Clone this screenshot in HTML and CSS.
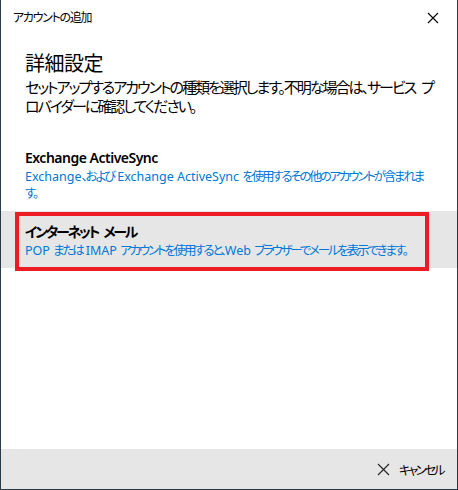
FILE: index.html
```html
<!DOCTYPE html>
<html lang="ja">
<head>
<meta charset="utf-8">
<title>アカウントの追加</title>
<link rel="stylesheet" href="styles.css">
</head>
<body>
<div class="window">
  <div class="titlebar">
    <span class="title">アカウントの追加</span>
    <svg class="close" width="12" height="12" viewBox="0 0 12 12"><path d="M1 1 L11 11 M11 1 L1 11" stroke="#000" stroke-width="1.1" fill="none"/></svg>
  </div>
  <div class="main">
    <div class="intro">
      <h1 class="heading">詳細設定</h1>
      <p class="subtitle">セットアップするアカウントの種類を選択します。不明な場合は、サービス プ<br>ロバイダーに確認してください。</p>
    </div>
    <div class="options">
      <div class="option">
        <div class="opt-title">Exchange ActiveSync</div>
        <div class="opt-desc">Exchange<span class="jp">、および</span> Exchange ActiveSync <span class="jp">を使用するその他のアカウントが含まれま</span><br><span class="jp">す。</span></div>
      </div>
      <div class="option selected">
        <div class="opt-title jp-title">インターネット メール</div>
        <div class="opt-desc">POP <span class="jp">または</span> IMAP <span class="jp">アカウントを使用すると、</span>Web <span class="jp">ブラウザーでメールを表示できます。</span></div>
        <div class="highlight"></div>
      </div>
    </div>
  </div>
  <div class="footer">
    <div class="cancel">
      <svg width="13" height="13" viewBox="0 0 13 13"><path d="M1 1 L12 12 M12 1 L1 12" stroke="#222" stroke-width="1.1" fill="none"/></svg>
      <span class="cancel-label">キャンセル</span>
    </div>
  </div>
</div>
</body>
</html>
```
FILE: styles.css
```css
html, body {
  margin: 0;
  padding: 0;
  background: #ffffff;
}
.window {
  width: 458px;
  height: 490px;
  box-sizing: border-box;
  border-left: 1px solid #2b3a45;
  border-right: 1px solid #2b3a45;
  border-bottom: 1px solid #2b3a45;
  display: flex;
  flex-direction: column;
  font-family: "Noto Sans", "Noto Sans CJK JP", sans-serif;
  font-feature-settings: "palt";
  color: #000;
}
.titlebar {
  height: 34px;
  display: flex;
  align-items: center;
  justify-content: space-between;
  padding: 0 18px 0 12px;
}
.title {
  font-size: 12px;
  letter-spacing: -1.3px;
}
.close {
  display: block;
  margin-top: 1px;
}
.main {
  flex: 1;
  display: flex;
  flex-direction: column;
}
.intro {
  padding: 16px 24px 0 24px;
}
.heading {
  margin: 0;
  font-size: 20px;
  font-weight: normal;
  line-height: 28px;
  letter-spacing: -0.5px;
}
.subtitle {
  margin: 0;
  font-size: 15px;
  line-height: 19px;
  letter-spacing: -2px;
  word-spacing: 4px;
  white-space: nowrap;
}
.options {
  margin-top: 21px;
  display: flex;
  flex-direction: column;
}
.option {
  position: relative;
  padding: 11px 24px 9px 24px;
}
.option.selected {
  background: #e6e6e6;
}
.opt-title {
  font-size: 14px;
  font-weight: 600;
  line-height: 20px;
  letter-spacing: -0.5px;
}
.opt-title.jp-title {
  letter-spacing: -2.3px;
  word-spacing: 4px;
}
.opt-desc {
  font-size: 12.5px;
  line-height: 17px;
  color: #0078d7;
  white-space: nowrap;
}
.jp {
  letter-spacing: -2.2px;
}
.highlight {
  position: absolute;
  left: 14px;
  right: 28px;
  top: 1px;
  bottom: -3px;
  border: 4px solid #ed1c24;
}
.footer {
  height: 40px;
  background: #e6e6e6;
  display: flex;
  justify-content: flex-end;
  align-items: center;
  padding-right: 14px;
}
.cancel {
  display: flex;
  align-items: center;
  gap: 9px;
  font-size: 12.5px;
  color: #000;
}
.cancel-label {
  letter-spacing: -2.5px;
}
.cancel svg {
  display: block;
}
```
